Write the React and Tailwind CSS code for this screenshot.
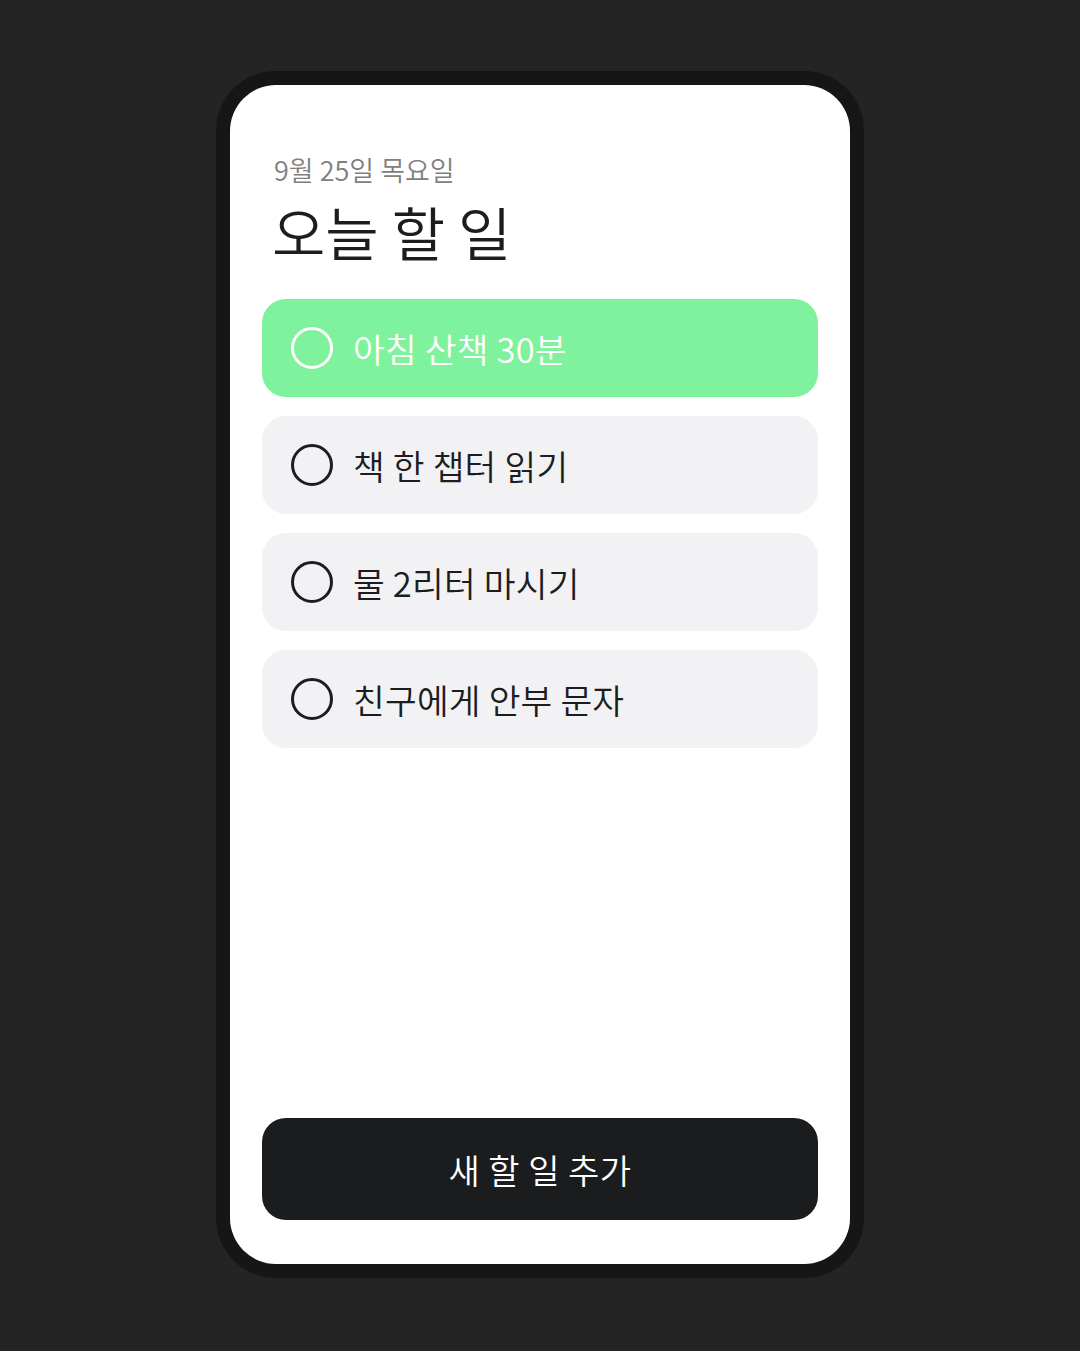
import { useState } from 'react'

const initialTodos = [
  { id: 1, title: '아침 산책 30분', active: true },
  { id: 2, title: '책 한 챕터 읽기', active: false },
  { id: 3, title: '물 2리터 마시기', active: false },
  { id: 4, title: '친구에게 안부 문자', active: false },
]

function TodoItem({ todo }) {
  const base = 'flex h-[98px] items-center gap-[20px] rounded-[24px] px-[29px]'
  return (
    <li className={todo.active ? `${base} bg-[#7ef29d] text-white` : `${base} bg-[#f2f2f4] text-[#1b1d1f]`}>
      <span
        className={
          todo.active
            ? 'h-[42px] w-[42px] shrink-0 rounded-full border-[3px] border-white'
            : 'h-[42px] w-[42px] shrink-0 rounded-full border-[3px] border-[#1b1d1f]'
        }
      />
      <span className="text-[34.5px] font-[350] leading-none tracking-[0.2px]">{todo.title}</span>
    </li>
  )
}

export default function App() {
  const [todos] = useState(initialTodos)

  return (
    <div
      className="flex min-h-screen justify-center bg-[#242424] pt-[71px]"
      style={{ fontFamily: '"Noto Sans CJK KR", "Noto Sans", sans-serif' }}
    >
      <div className="h-fit rounded-[60px] bg-[#161616] p-[14px]">
        <div className="flex h-[1179px] w-[620px] flex-col rounded-[46px] bg-white px-[32px] pb-[44px] pt-[67px]">
          <p className="pl-[12px] text-[27px] font-[350] leading-[36px] text-[#808080]">9월 25일 목요일</p>
          <h1 className="mt-[8px] pl-[10px] text-[58px] font-[350] leading-[70px] text-[#1b1d1f]">오늘 할 일</h1>

          <ul className="mt-[33px] flex flex-col gap-[19px]">
            {todos.map((todo) => (
              <TodoItem key={todo.id} todo={todo} />
            ))}
          </ul>

          <button
            type="button"
            className="mt-auto h-[102px] w-full rounded-[24px] bg-[#1a1c1e] text-[34px] font-[350] text-white tracking-[0.5px]"
          >
            새 할 일 추가
          </button>
        </div>
      </div>
    </div>
  )
}
